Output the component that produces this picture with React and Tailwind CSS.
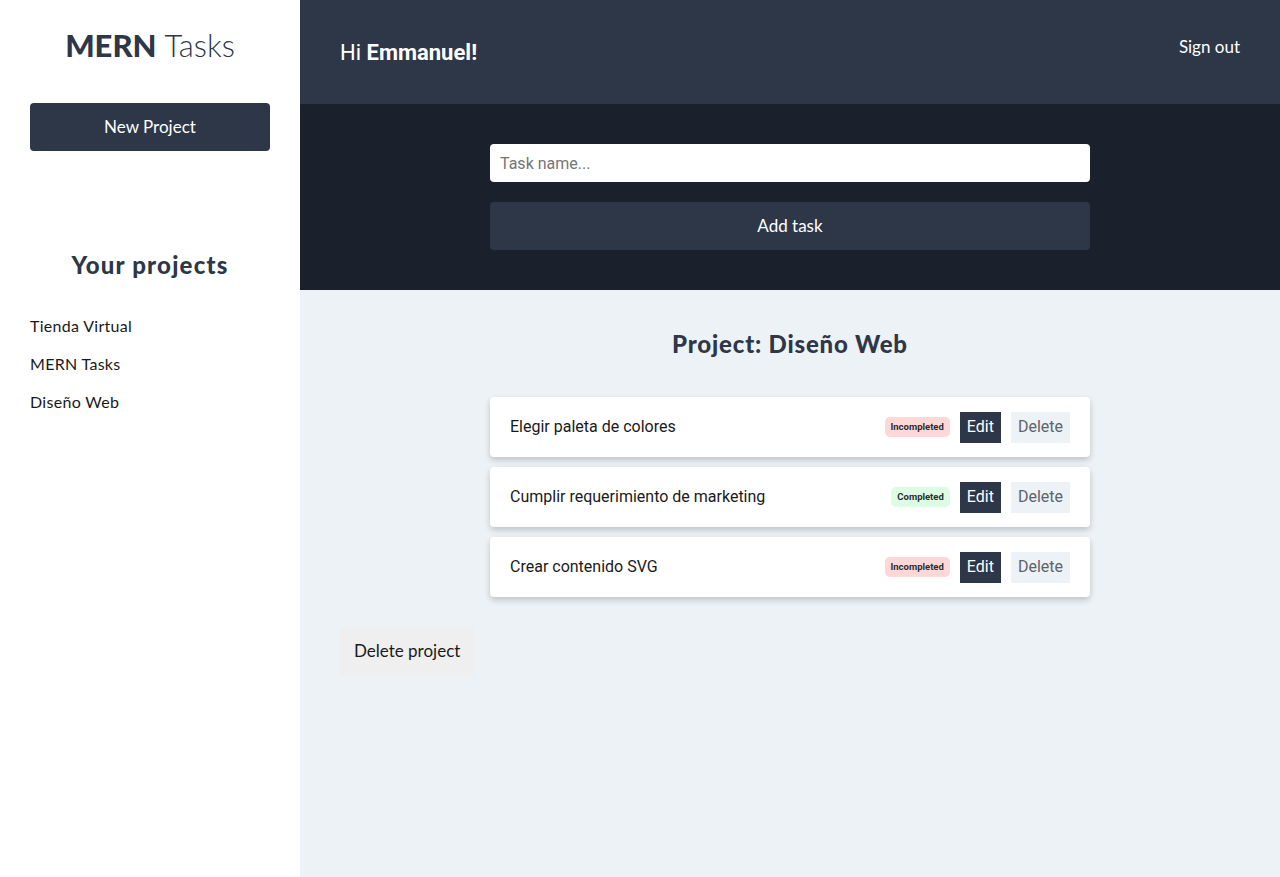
import React from "react";

const PROJECTS = ["Tienda Virtual", "MERN Tasks", "Diseño Web"];

const TASKS = [
  { name: "Elegir paleta de colores", done: false },
  { name: "Cumplir requerimiento de marketing", done: true },
  { name: "Crear contenido SVG", done: false },
];

const heading = "font-['Lato','Noto_Sans',sans-serif]";
const body = "font-['Roboto','Liberation_Sans',sans-serif]";

function Sidebar() {
  return (
    <aside className={`w-[300px] shrink-0 bg-white px-[30px] pt-[25px] ${heading}`}>
      <h1 className="text-center text-[31px] leading-[40px] text-[#2d3748]">
        <span className="font-black">MERN</span> <span className="font-light">Tasks</span>
      </h1>
      <button className="mt-[38px] flex h-[48px] w-full items-center justify-center rounded bg-[#2d3748] text-[17px] text-white">
        New Project
      </button>
      <h2 className="mt-[98px] text-center text-[24px] font-black leading-[32px] tracking-[1.2px] text-[#2d3748]">
        Your projects
      </h2>
      <ul className="mt-[33px] flex flex-col gap-[14px]">
        {PROJECTS.map((p) => (
          <li key={p} className="text-[16px] leading-[24px] tracking-[0.3px] text-[#1a1a1a]">
            {p}
          </li>
        ))}
      </ul>
    </aside>
  );
}

function TaskRow({ task }) {
  return (
    <li className="flex h-[60px] items-center justify-between rounded bg-white pl-[20px] pr-[20px] shadow-[0_3px_6px_rgba(0,0,0,0.2)]">
      <span className={`${body} text-[16px] text-[#1a1a1a]`}>{task.name}</span>
      <div className="flex items-center">
        <span
          className={`${body} flex h-[20px] items-center rounded-[5px] px-[6px] text-[9.5px] font-bold text-[#2d2d2d] ${
            task.done ? "bg-[#dcfce3]" : "bg-[#fed7d7]"
          }`}
        >
          {task.done ? "Completed" : "Incompleted"}
        </span>
        <button className={`${body} ml-[10px] h-[31px] bg-[#2d3748] px-[7px] text-[16px] text-white`}>Edit</button>
        <button className={`${body} ml-[10px] h-[31px] bg-[#edf2f7] px-[7px] text-[16px] text-[#5f6368]`}>Delete</button>
      </div>
    </li>
  );
}

export default function App() {
  return (
    <div className="flex min-h-[877px] w-full">
      <Sidebar />
      <main className="flex flex-1 flex-col bg-[#edf2f7]">
        <header className="flex h-[104px] items-center justify-between bg-[#2d3748] pl-[40px] pr-[40px]">
          <p className={`${body} text-[22px] text-white`}>
            Hi <span className="font-bold">Emmanuel!</span>
          </p>
          <button className={`${heading} mb-[10px] text-[17px] text-white`}>Sign out</button>
        </header>
        <section className="flex h-[186px] flex-col items-center bg-[#1a202c] pt-[40px]">
          <input
            placeholder="Task name..."
            className={`${body} h-[38px] w-[600px] rounded bg-white px-[10px] text-[16px] text-[#333] outline-none placeholder:text-[#757575]`}
          />
          <button className={`${heading} mt-[20px] h-[48px] w-[600px] rounded bg-[#2d3748] text-[17px] text-white`}>
            Add task
          </button>
        </section>
        <section className="flex flex-col px-[40px] pt-[38px]">
          <h2 className={`${heading} text-center text-[24px] font-black leading-[32px] tracking-[0.8px] text-[#2d3748]`}>
            Project: Diseño Web
          </h2>
          <ul className="mx-auto mt-[37px] flex w-[600px] flex-col gap-[10px]">
            {TASKS.map((t) => (
              <TaskRow key={t.name} task={t} />
            ))}
          </ul>
          <div className="mt-[30px]">
            <button className={`${heading} h-[48px] bg-[#efefef] px-[14px] text-[17px] text-[#1a1a1a]`}>
              Delete project
            </button>
          </div>
        </section>
      </main>
    </div>
  );
}
